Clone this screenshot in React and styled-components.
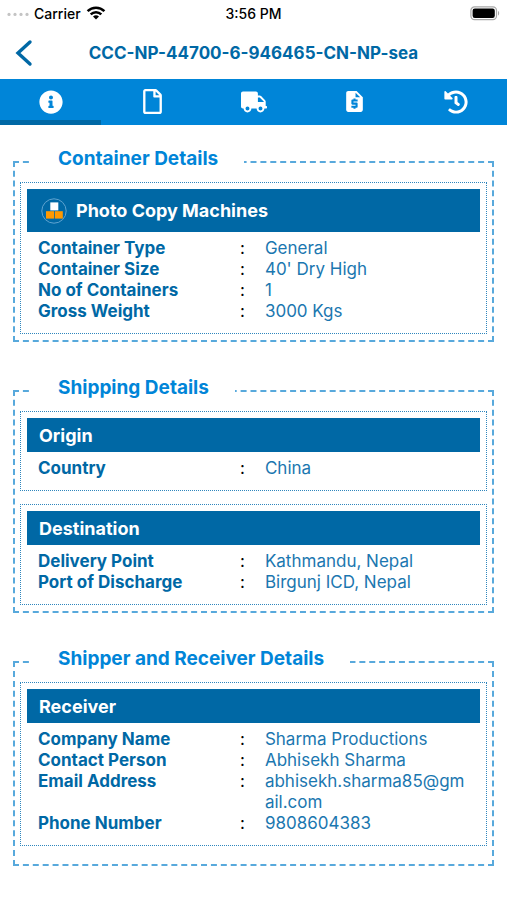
import styled, { createGlobalStyle } from "styled-components";
import { FaHistory, FaInfoCircle, FaRegFile, FaTruck } from "react-icons/fa";
import { MdRequestQuote } from "react-icons/md";

const tabs = [
  { label: "Info", icon: <FaInfoCircle size={24} /> },
  { label: "Documents", icon: <FaRegFile size={25} /> },
  { label: "Transport", icon: <FaTruck size={26} /> },
  { label: "Quotes", icon: <MdRequestQuote size={25} /> },
  { label: "History", icon: <FaHistory size={24} /> },
];

const sections = [
  {
    title: "Container Details",
    cards: [
      {
        title: "Photo Copy Machines",
        boxes: true,
        rows: [
          ["Container Type", "General"],
          ["Container Size", "40' Dry High"],
          ["No of Containers", "1"],
          ["Gross Weight", "3000 Kgs"],
        ],
      },
    ],
  },
  {
    title: "Shipping Details",
    cards: [
      { title: "Origin", rows: [["Country", "China"]] },
      {
        title: "Destination",
        rows: [
          ["Delivery Point", "Kathmandu, Nepal"],
          ["Port of Discharge", "Birgunj ICD, Nepal"],
        ],
      },
    ],
  },
  {
    title: "Shipper and Receiver Details",
    roomy: true,
    cards: [
      {
        title: "Receiver",
        rows: [
          ["Company Name", "Sharma Productions"],
          ["Contact Person", "Abhisekh Sharma"],
          ["Email Address", "abhisekh.sharma85@gmail.com"],
          ["Phone Number", "9808604383"],
        ],
      },
    ],
  },
];

const BoxesIcon = () => (
  <svg width="26" height="26" viewBox="0 0 26 26" aria-hidden="true">
    <circle cx="13" cy="13" r="12.2" fill="none" stroke="#5fa3d0" />
    <rect x="9.3" y="4.4" width="8" height="8" fill="#fff" />
    <rect x="5" y="13.2" width="8" height="7.4" fill="#f90" />
    <rect x="13.8" y="13.2" width="8" height="7.4" fill="#f90" />
  </svg>
);

const StatusBar = () => (
  <Status>
    <Carrier>
      <svg width="22" height="6" viewBox="0 0 22 6" aria-hidden="true">
        {[2, 8, 14, 20].map((x) => (
          <circle key={x} cx={x} cy="4.4" r="1.6" fill="#c4c4c4" />
        ))}
      </svg>
      <span>Carrier</span>
      <svg width="20" height="14" viewBox="0 0 20 14" aria-hidden="true">
        <g fill="none" stroke="#000" strokeWidth="2.5">
          <path d="M1.6 5.2a12 12 0 0 1 16.8 0" />
          <path d="M4.7 8.4a7.6 7.6 0 0 1 10.6 0" />
        </g>
        <path d="M10 13.6l-3-3a4.3 4.3 0 0 1 6 0z" />
      </svg>
    </Carrier>
    <span>3:56 PM</span>
    <Battery>
      <svg width="30" height="15" viewBox="0 0 30 15" aria-hidden="true">
        <rect x="0.9" y="0.9" width="25.6" height="12.8" rx="3.6" fill="#fff" stroke="#a8a8a8" strokeWidth="1.2" />
        <rect x="2.6" y="2.6" width="22.2" height="9.4" rx="2.2" />
        <path d="M28 5v4.6c1.6-.6 1.6-4 0-4.6z" fill="#a8a8a8" />
      </svg>
    </Battery>
  </Status>
);

const App = () => {
  return (
    <>
      <GlobalStyle />
      <StatusBar />
      <Header>
        <BackButton type="button" aria-label="Back">
          <svg width="18" height="28" viewBox="0 0 18 28" aria-hidden="true">
            <path d="M15 3L3 14l12 11" fill="none" stroke="#0068a5" strokeWidth="3.4" strokeLinecap="round" />
          </svg>
        </BackButton>
        <Title>CCC-NP-44700-6-946465-CN-NP-sea</Title>
      </Header>
      <Tabs>
        {tabs.map((tab, i) => (
          <Tab key={tab.label} type="button" aria-label={tab.label} $active={i === 0}>
            {tab.icon}
          </Tab>
        ))}
      </Tabs>
      <Content>
        {sections.map((section) => (
          <Section key={section.title} $roomy={section.roomy}>
            <Legend>{section.title}</Legend>
            <Cards>
              {section.cards.map((card) => (
                <Card key={card.title}>
                  <CardTitle $tall={card.boxes}>
                    {card.boxes && <BoxesIcon />}
                    {card.title}
                  </CardTitle>
                  <Table>
                    <tbody>
                      {card.rows.map(([name, value]) => (
                        <tr key={name}>
                          <Name scope="row">{name}</Name>
                          <Colon>:</Colon>
                          <Value>{value}</Value>
                        </tr>
                      ))}
                    </tbody>
                  </Table>
                </Card>
              ))}
            </Cards>
          </Section>
        ))}
      </Content>
    </>
  );
};

export default App;

const GlobalStyle = createGlobalStyle`
  * {
    box-sizing: border-box;
  }
  body {
    margin: 0;
    background: #fff;
    color: #000;
    font-family: Inter, "Liberation Sans", sans-serif;
  }
`;

const Status = styled.div`
  display: grid;
  grid-template-columns: 1fr auto 1fr;
  align-items: center;
  height: 26px;
  padding: 0 7px;
  font-size: 14px;
  font-weight: 500;
`;

const Carrier = styled.div`
  display: flex;
  align-items: center;
  gap: 5px;
`;

const Battery = styled.div`
  display: flex;
  justify-content: flex-end;
`;

const Header = styled.header`
  display: grid;
  grid-template-columns: 48px 1fr 48px;
  align-items: center;
  height: 53px;
`;

const BackButton = styled.button`
  display: flex;
  padding: 0 0 0 15px;
  border: none;
  background: none;
`;

const Title = styled.h1`
  margin: 0;
  text-align: center;
  font-size: 17px;
  font-weight: 700;
  color: #0068a5;
`;

const Tabs = styled.nav`
  display: flex;
  height: 46px;
  background: #0085d8;
`;

const Tab = styled.button`
  flex: 1;
  display: flex;
  align-items: center;
  justify-content: center;
  padding: 4px 0 0;
  border: none;
  border-bottom: 5px solid ${(props) => (props.$active ? "#0068a5" : "transparent")};
  background: none;
  color: #fff;
`;

const Content = styled.main`
  display: flex;
  flex-direction: column;
  gap: 34px;
  padding: 22px 13px;
`;

const Section = styled.fieldset`
  min-width: 0;
  margin: 0;
  padding: 5px 5px ${(props) => (props.$roomy ? 18 : 6)}px;
  border: 2px dashed #58a9dc;
`;

const Legend = styled.legend`
  margin-left: 12px;
  padding: 0 26px 6px;
  font-size: 19px;
  line-height: 24px;
  font-weight: 700;
  color: #0085d8;
`;

const Cards = styled.div`
  display: flex;
  flex-direction: column;
  gap: 13px;
`;

const Card = styled.section`
  padding: 6px 6px 11px;
  border: 1px dotted #2f86bd;
`;

const CardTitle = styled.h2`
  display: flex;
  align-items: center;
  gap: 9px;
  height: ${(props) => (props.$tall ? 43 : 34)}px;
  margin: 0 0 6px;
  padding: 0 ${(props) => (props.$tall ? 14 : 12)}px;
  background: #0068a5;
  color: #fff;
  font-size: 18px;
  font-weight: 700;
`;

const Table = styled.table`
  width: 100%;
  table-layout: fixed;
  border-collapse: collapse;
  font-size: 17px;
  line-height: 21px;

  th,
  td {
    padding: 0;
    vertical-align: top;
    text-align: left;
  }
`;

const Name = styled.th`
  width: 47%;
  font-weight: 700;
  color: #0068a5;

  && {
    padding-left: 11px;
  }
`;

const Colon = styled.td`
  width: 25px;
`;

const Value = styled.td`
  color: #1b77b0;
  overflow-wrap: anywhere;

  && {
    padding-right: 8px;
  }
`;
